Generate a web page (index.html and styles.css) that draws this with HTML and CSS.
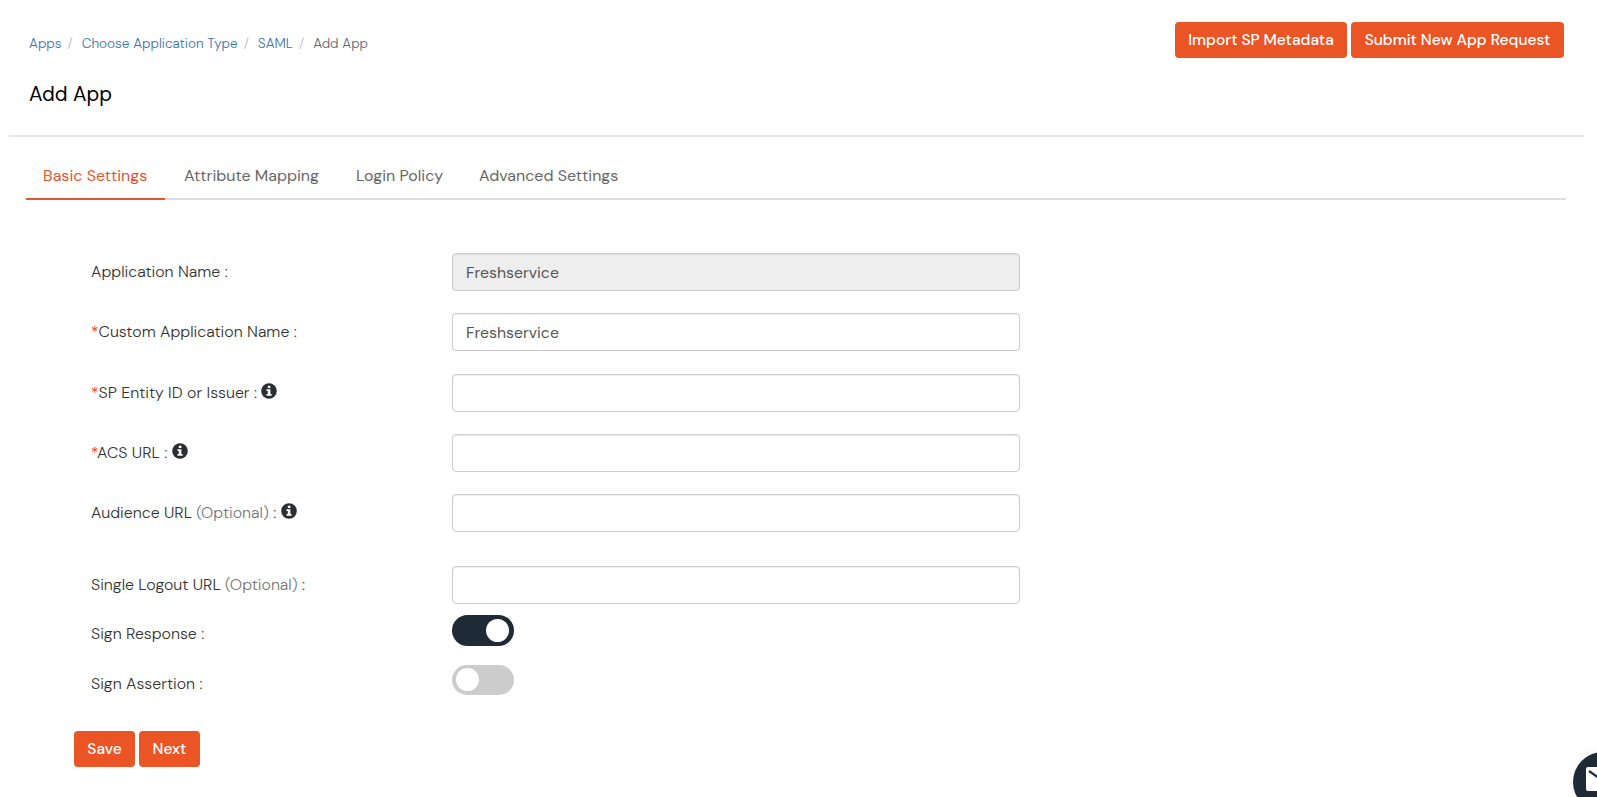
FILE: index.html
```
<!DOCTYPE html>
<html lang="en">
<head>
<meta charset="utf-8">
<title>Add App</title>
<link rel="stylesheet" href="styles.css">
</head>
<body>
<svg class="sprite" width="0" height="0">
  <symbol id="info" viewBox="0 0 16 16">
    <circle cx="8" cy="8" r="7.8" fill="#2b2e30"/>
    <path fill="#fff" d="M6.8 2.7h2.6v2.2H6.8zM5.5 6.2h3.9v4.9h1.2v1.7H5.5v-1.7h1.3V7.9H5.5z"/>
  </symbol>
</svg>

<div class="page-header">
  <div>
    <ul class="breadcrumb">
      <li><a href="#">Apps</a></li>
      <li><a href="#">Choose Application Type</a></li>
      <li><a href="#">SAML</a></li>
      <li>Add App</li>
    </ul>
    <h1>Add App</h1>
  </div>
  <div class="header-buttons">
    <button class="btn btn-import">Import SP Metadata</button>
    <button class="btn btn-submit">Submit New App Request</button>
  </div>
</div>

<div class="nav-tabs">
  <a class="tab tab-basic active" href="#">Basic Settings</a>
  <a class="tab tab-mapping" href="#">Attribute Mapping</a>
  <a class="tab tab-login" href="#">Login Policy</a>
  <a class="tab tab-advanced" href="#">Advanced Settings</a>
</div>

<form class="app-form">
  <div class="form-row">
    <label>Application Name :</label>
    <input class="form-control" type="text" value="Freshservice" disabled>
  </div>
  <div class="form-row">
    <label><span class="required">*</span>Custom Application Name :</label>
    <input class="form-control" type="text" value="Freshservice">
  </div>
  <div class="form-row entity-row">
    <label><span class="required">*</span>SP Entity ID or Issuer : <svg class="info"><use href="#info"/></svg></label>
    <input class="form-control" type="text">
  </div>
  <div class="form-row">
    <label><span class="required">*</span>ACS URL : <svg class="info"><use href="#info"/></svg></label>
    <input class="form-control" type="text">
  </div>
  <div class="form-row">
    <label>Audience URL <span class="optional">(Optional)</span> : <svg class="info"><use href="#info"/></svg></label>
    <input class="form-control" type="text">
  </div>
  <div class="form-row logout-row">
    <label>Single Logout URL <span class="optional">(Optional)</span> :</label>
    <input class="form-control" type="text">
  </div>
  <div class="form-row switch-row">
    <label>Sign Response :</label>
    <span class="switch on"><span class="knob"></span></span>
  </div>
  <div class="form-row switch-row">
    <label>Sign Assertion :</label>
    <span class="switch"><span class="knob"></span></span>
  </div>
  <div class="form-buttons">
    <button class="btn" type="button">Save</button>
    <button class="btn" type="button">Next</button>
  </div>
</form>

<div class="chat">
  <svg width="60" height="60" viewBox="0 0 60 60">
    <rect x="13" y="15" width="34" height="24" rx="2" fill="#fff"/>
    <path d="M16 19l14 10 14-10" fill="none" stroke="#1e2b37" stroke-width="2.2"/>
  </svg>
</div>
</body>
</html>
```
FILE: styles.css
```
* {
  box-sizing: border-box;
}

body {
  margin: 0;
  height: 797px;
  overflow: hidden;
  background: #fff;
  color: #333;
  font-family: "DM Sans", Inter, "Open Sans", sans-serif;
  font-size: 16px;
}

a {
  text-decoration: none;
}

.sprite {
  position: absolute;
}

.page-header {
  display: flex;
  justify-content: space-between;
  align-items: flex-start;
  height: 137px;
  margin: 0 13px 0 9px;
  padding: 22px 20px 0;
  border-bottom: 2px solid #e7e7e7;
}

.breadcrumb {
  display: flex;
  margin: 12px 0 0;
  padding: 0;
  list-style: none;
  font-size: 13.6px;
  font-weight: 300;
  line-height: 20px;
  color: #666;
}

.breadcrumb a {
  color: #3a72ae;
}

.breadcrumb li + li::before {
  content: "/";
  padding: 0 9px 0 6px;
  color: #bbb;
}

h1 {
  margin: 26px 0 0;
  font-size: 20.4px;
  font-weight: 400;
  line-height: 28px;
  color: #000;
}

.header-buttons, .form-buttons {
  display: flex;
  gap: 4px;
}

.btn {
  height: 36px;
  min-width: 61px;
  padding: 0 0 1px;
  border: none;
  border-radius: 4px;
  background: #eb5424;
  color: #fff;
  font-family: inherit;
  font-size: 15.5px;
  font-weight: 500;
  white-space: nowrap;
}

.btn-import {
  width: 172px;
}

.btn-submit {
  width: 213px;
}

.nav-tabs {
  display: flex;
  gap: 2px;
  height: 47px;
  margin: 16px 31px 0 26px;
  border-bottom: 2px solid #ddd;
}

.tab {
  height: 47px;
  padding: 0 17px;
  line-height: 46px;
  color: #666;
  white-space: nowrap;
}

.tab.active {
  color: #e0562f;
  border-bottom: 2px solid #e0562f;
}

.tab-basic {
  width: 139px;
}

.tab-mapping {
  width: 170px;
}

.tab-login {
  width: 121px;
}

.app-form {
  padding: 53px 0 0 74px;
}

.form-row {
  display: flex;
  align-items: flex-start;
  height: 38px;
  margin-bottom: 22px;
  padding-left: 17px;
}

.form-row label {
  width: 361px;
  font-size: 15.95px;
  font-weight: 300;
  line-height: 38px;
  white-space: nowrap;
}

.entity-row {
  margin-top: 23px;
}

.required {
  color: #e22;
}

.optional {
  color: #777;
}

.info {
  width: 16px;
  height: 16px;
  vertical-align: -1px;
}

.form-control {
  width: 568px;
  height: 38px;
  padding: 1px 13px 0;
  border: 1px solid #ccc;
  border-radius: 4px;
  box-shadow: inset 0 1px 1px rgba(0, 0, 0, .075);
  background: #fff;
  color: #555;
  font-family: inherit;
  font-size: 15.8px;
}

.form-control:disabled {
  background: #eee;
}

.logout-row {
  margin-top: 34px;
  margin-bottom: 11px;
}

.switch-row {
  height: 31px;
  margin-bottom: 19px;
}

.switch {
  width: 62px;
  height: 30px;
  padding: 3px 4px;
  border-radius: 16px;
  background: #ccc;
}

.switch.on {
  height: 31px;
  padding: 4px 4px 4px 34px;
  background: #1e2b37;
}

.knob {
  display: block;
  width: 23px;
  height: 23px;
  border-radius: 50%;
  background: #fff;
}

.form-buttons {
  margin-top: 35px;
}

/* chat launcher, half off the corner */
.chat {
  position: fixed;
  left: 1573px;
  top: 752px;
  width: 60px;
  height: 60px;
  border-radius: 50%;
  background: #1e2b37;
  box-shadow: 0 0 12px rgba(0, 0, 0, .06);
}
```
